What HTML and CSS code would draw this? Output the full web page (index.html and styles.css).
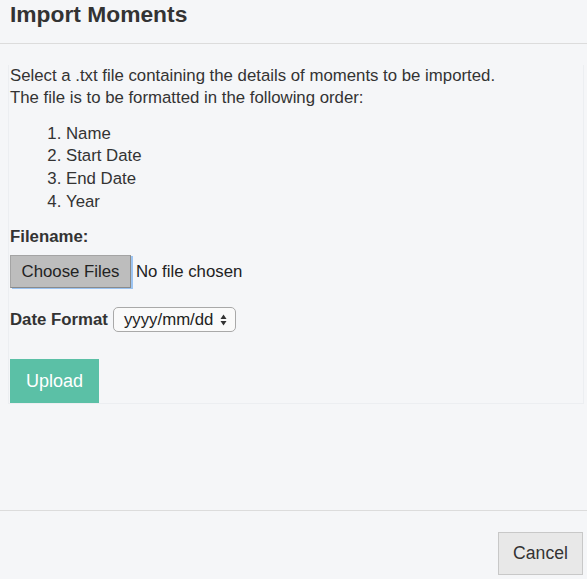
FILE: index.html
```html
<!DOCTYPE html>
<html>
<head>
<meta charset="utf-8">
<link rel="stylesheet" href="styles.css">
</head>
<body>
<div class="modal">
  <div class="modal-header">
    <h3 class="title">Import Moments</h3>
  </div>
  <div class="modal-body">
    <div class="panel">
      <p class="intro">Select a .txt file containing the details of moments to be imported.<br>The file is to be formatted in the following order:</p>
      <ol class="order">
        <li>Name</li>
        <li>Start Date</li>
        <li>End Date</li>
        <li>Year</li>
      </ol>
      <div class="label">Filename:</div>
      <div class="file-row">
        <span class="file-btn">Choose Files</span>
        <span class="file-status">No file chosen</span>
      </div>
      <div class="date-row">
        <span class="label inline">Date Format</span>
        <span class="select">yyyy/mm/dd
          <svg class="arrows" width="7" height="12" viewBox="0 0 7 12"><path d="M3.5 0.5 L6.5 5 L0.5 5 Z" fill="#333"/><path d="M3.5 11.5 L6.5 7 L0.5 7 Z" fill="#333"/></svg>
        </span>
      </div>
      <div class="upload">Upload</div>
    </div>
  </div>
  <div class="modal-footer">
    <span class="cancel">Cancel</span>
  </div>
</div>
</body>
</html>
```
FILE: styles.css
```css
html, body {
  margin: 0;
  padding: 0;
  background: #f5f6f8;
}
body {
  font-family: "Liberation Sans", Arial, sans-serif;
  color: #333;
  font-size: 16.8px;
}
.modal {
  width: 587px;
  height: 579px;
  display: flex;
  flex-direction: column;
}
.modal-header {
  height: 44px;
  border-bottom: 1px solid #dcdcdc;
  box-sizing: border-box;
  padding: 1px 10px 0;
}
.title {
  margin: 0;
  font-size: 22.8px;
  font-weight: bold;
  line-height: 26px;
  color: #333;
}
.modal-body {
  padding: 21px 3px 0 8px;
  height: 467px;
  box-sizing: border-box;
  border-bottom: 1px solid #dcdcdc;
}
.panel {
  background: #f5f6f8;
  border-left: 1px solid #eceef1;
  border-right: 1px solid #eceef1;
  border-bottom: 1px solid #eceef1;
  padding: 0 0 0 1px;
  height: 339px;
  box-sizing: border-box;
}
.intro {
  margin: 0;
  line-height: 22px;
}
.order {
  margin: 13.6px 0 0 0;
  padding-left: 56px;
  line-height: 22.7px;
}
.label {
  font-weight: bold;
  line-height: 20px;
}
.order + .label {
  margin-top: 13.6px;
}
.file-row {
  display: flex;
  align-items: center;
  margin-top: 8px;
}
.file-btn {
  display: inline-block;
  width: 121px;
  height: 33px;
  box-sizing: border-box;
  line-height: 31px;
  text-align: center;
  background: #bdbdbd;
  border: 1px solid #a4a4a4;
  border-right-color: #8a8a8a;
  border-bottom-color: #8a8a8a;
  box-shadow: 2px 1px 0 #9cc4f2;
  color: #222;
}
.file-status {
  margin-left: 5px;
  color: #222;
}
.date-row {
  display: flex;
  align-items: center;
  margin-top: 19px;
}
.select {
  margin-left: 5px;
  height: 25px;
  width: 123px;
  box-sizing: border-box;
  border: 1px solid #a9a9a9;
  border-radius: 5px;
  background: #fafafa;
  display: flex;
  align-items: center;
  padding-left: 10px;
  color: #222;
}
.arrows {
  margin-left: 7px;
}
.upload {
  margin-top: 27px;
  width: 89px;
  height: 44px;
  line-height: 44px;
  text-align: center;
  background: #5bc0a6;
  color: #fff;
  font-size: 18px;
}
.modal-footer {
  flex: 1;
  display: flex;
  justify-content: flex-end;
  align-items: flex-start;
  padding: 21px 4px 0 0;
}
.cancel {
  display: inline-block;
  width: 85px;
  height: 43px;
  box-sizing: border-box;
  line-height: 41px;
  text-align: center;
  background: #e8e8e8;
  border: 1px solid #c8c8c8;
  font-size: 17.6px;
  color: #333;
}
```
